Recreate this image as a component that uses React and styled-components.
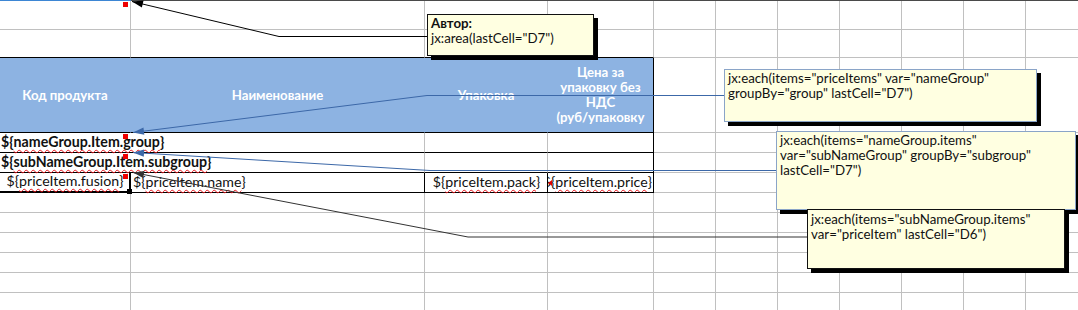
import React from 'react';
import styled, { createGlobalStyle } from 'styled-components';

const GRID = '#c0c0c0';
const BLACK = '#000';
const HEAD = '#8db3e2';
const FONT = 'Lato, "Open Sans", sans-serif';

const Global = createGlobalStyle`
  html, body { margin: 0; padding: 0; background: #fff; }
  body { overflow: hidden; }
`;

const Sheet = styled.div`
  position: relative;
  width: 1078px;
  height: 310px;
  overflow: hidden;
  background: #fff;
  font-family: ${FONT};
  color: #111;
`;

const Edge = styled.div`
  display: flex;
  height: 1px;
`;

const EdgeSeg = styled.div`
  flex: ${p => (p.$w ? `0 0 ${p.$w}px` : '1')};
  background: ${p => (p.$active ? '#3d86d4' : '#4a4a4a')};
`;

const Grid = styled.div`
  display: grid;
  grid-template-columns: 131px 294px 123px 106px repeat(7, 62px);
  grid-template-rows: 29px 28px 75px repeat(9, 20px);
`;

const Cell = styled.div`
  position: relative;
  box-sizing: border-box;
  grid-column: span ${p => p.$span || 1};
  border-right: ${p => p.$rw || 1}px solid ${p => p.$r || GRID};
  border-bottom: ${p => p.$bw || 1}px solid ${p => p.$b || GRID};
  background: ${p => p.$bg || 'transparent'};
  white-space: nowrap;
`;

const HeadCell = styled(Cell)`
  background: ${HEAD};
  display: flex;
  align-items: center;
  justify-content: center;
  text-align: center;
  color: #fff;
  font-weight: 700;
  font-size: 13.2px;
  line-height: 15px;
  white-space: normal;
`;

const TextCell = styled(Cell)`
  display: flex;
  align-items: flex-end;
  justify-content: ${p => p.$align || 'flex-start'};
  padding: 0 ${p => p.$pr || 0}px 1px ${p => p.$pl || 1}px;
  font-size: 14.2px;
  line-height: 18px;
  font-weight: ${p => (p.$bold ? 700 : 400)};
  overflow: ${p => (p.$clip ? 'hidden' : 'visible')};
  z-index: 1;
`;

const Spell = styled.span`
  text-decoration: underline wavy #e8141b;
  text-decoration-thickness: 1px;
  text-underline-offset: 2px;
  text-decoration-skip-ink: none;
`;

const Marker = styled.span`
  position: absolute;
  top: 1px;
  left: 123px;
  width: 5px;
  height: 5px;
  background: #ee0000;
`;

const Overflow = styled.span`
  position: absolute;
  left: 0px;
  top: 7px;
  width: 0;
  height: 0;
  border-top: 3px solid transparent;
  border-bottom: 3px solid transparent;
  border-right: 4px solid #e00000;
`;

const Handle = styled.span`
  position: absolute;
  right: -3px;
  bottom: -3px;
  width: 5px;
  height: 5px;
  background: #000;
  z-index: 3;
`;

const Arrows = styled.svg`
  position: absolute;
  left: 0;
  top: 0;
  pointer-events: none;
  z-index: 2;
`;

const Note = styled.div`
  position: absolute;
  left: ${p => p.$x}px;
  top: ${p => p.$y}px;
  width: ${p => p.$w}px;
  height: ${p => p.$h}px;
  box-sizing: border-box;
  padding: ${p => p.$pt || 1}px 3px 1px 3px;
  background: #ffffe1;
  border: 1px solid ${p => (p.$blue ? '#8aa4c8' : '#111')};
  box-shadow: 4px 4px 0 #000;
  font-family: ${FONT};
  font-size: 13.3px;
  line-height: 15px;
  color: #111;
  white-space: nowrap;
  z-index: ${p => p.$z || 3};
`;

const NoteTitle = styled.div`
  font-weight: 700;
`;

const fill = (n, k) => Array.from({ length: n }, (_, i) => <Cell key={k + i} />);

function Arrow({ pts, color, width = 1 }) {
  const [x1, y1] = pts[pts.length - 2];
  const [x2, y2] = pts[pts.length - 1];
  const dx = x2 - x1;
  const dy = y2 - y1;
  const len = Math.hypot(dx, dy);
  const ux = dx / len;
  const uy = dy / len;
  const L = 11;
  const W = 3.6;
  const bx = x2 - ux * L;
  const by = y2 - uy * L;
  const head = `${x2},${y2} ${bx - uy * W},${by + ux * W} ${bx + uy * W},${by - ux * W}`;
  const line = pts.map(p => p.join(',')).join(' ');
  return (
    <g>
      <polyline points={line} fill="none" stroke={color} strokeWidth={width} />
      <polygon points={head} fill={color} />
    </g>
  );
}

export default function App() {
  const blank = [];
  for (let r = 0; r < 6; r++) blank.push(...fill(11, `b${r}-`));

  return (
    <>
      <Global />
      <Sheet>
        <Edge>
          <EdgeSeg $w={131} $active />
          <EdgeSeg />
        </Edge>
        <Grid>
          {/* row 1 */}
          <Cell>
            <Marker />
          </Cell>
          {fill(10, 'r1-')}

          {/* row 2 */}
          <Cell $b={BLACK} />
          <Cell $b={BLACK} />
          <Cell $b={BLACK} />
          <Cell $b={BLACK} />
          {fill(7, 'r2-')}

          {/* header */}
          <HeadCell $r={HEAD} $b={BLACK}>Код продукта</HeadCell>
          <HeadCell $r={HEAD} $b={BLACK}>Наименование</HeadCell>
          <HeadCell $r={HEAD} $b={BLACK}>Упаковка</HeadCell>
          <HeadCell $r={BLACK} $b={BLACK}>
            Цена за
            <br />
            упаковку без
            <br />
            НДС
            <br />
            (руб/упаковку
          </HeadCell>
          {fill(7, 'h-')}

          {/* group row */}
          <TextCell $span={2} $b={BLACK} $bold>
            ${'{'}
            <Spell>nameGroup.Item.group</Spell>
            {'}'}
            <Marker />
          </TextCell>
          <Cell $b={BLACK} />
          <Cell $b={BLACK} $r={BLACK} />
          {fill(7, 'g1-')}

          {/* subgroup row */}
          <TextCell $span={2} $b={BLACK} $bold>
            ${'{'}
            <Spell>subNameGroup.Item.subgroup</Spell>
            {'}'}
            <Marker />
          </TextCell>
          <Cell $b={BLACK} />
          <Cell $b={BLACK} $r={BLACK} />
          {fill(7, 'g2-')}

          {/* item row */}
          <TextCell $align="center" $r={BLACK} $rw={2} $b={BLACK} $bw={2}>
            ${'{'}
            <Spell>priceItem.fusion</Spell>
            {'}'}
            <Marker />
            <Handle />
          </TextCell>
          <TextCell $pl={2} $r={BLACK} $b={BLACK}>
            ${'{'}
            <Spell>priceItem.name</Spell>
            {'}'}
          </TextCell>
          <TextCell $align="center" $r={BLACK} $b={BLACK}>
            ${'{'}
            <Spell>priceItem.pack</Spell>
            {'}'}
          </TextCell>
          <TextCell $align="flex-end" $pr={1} $clip $r={BLACK} $b={BLACK}>
            ${'{'}
            <Spell>priceItem.price</Spell>
            {'}'}
            <Overflow />
          </TextCell>
          {fill(7, 'i-')}

          {blank}
        </Grid>

        <Arrows width="1078" height="310" viewBox="0 0 1078 310">
          <Arrow pts={[[427, 36.5], [279, 36.5], [132, 1.5]]} color="#000" />
          <Arrow pts={[[724, 95.5], [427, 95.5], [133, 132.5]]} color="#3c68a8" />
          <Arrow pts={[[776, 170.5], [430, 170.5], [133, 152.5]]} color="#3c68a8" />
          <Arrow pts={[[807, 237], [468, 237], [133, 172.5]]} color="#333" />
        </Arrows>

        <Note $x={427} $y={14} $w={167} $h={42}>
          <NoteTitle>Автор:</NoteTitle>
          jx:area(lastCell="D7")
        </Note>

        <Note $x={724} $y={69} $w={313} $h={53} $blue>
          jx:each(items="priceItems" var="nameGroup"
          <br />
          groupBy="group" lastCell="D7")
        </Note>

        <Note $x={776} $y={131} $w={300} $h={79} $blue $z={3}>
          jx:each(items="nameGroup.items"
          <br />
          var="subNameGroup" groupBy="subgroup"
          <br />
          lastCell="D7")
        </Note>

        <Note $x={807} $y={209} $w={258} $h={60} $pt={2} $z={4}>
          jx:each(items="subNameGroup.items"
          <br />
          var="priceItem" lastCell="D6")
        </Note>
      </Sheet>
    </>
  );
}
